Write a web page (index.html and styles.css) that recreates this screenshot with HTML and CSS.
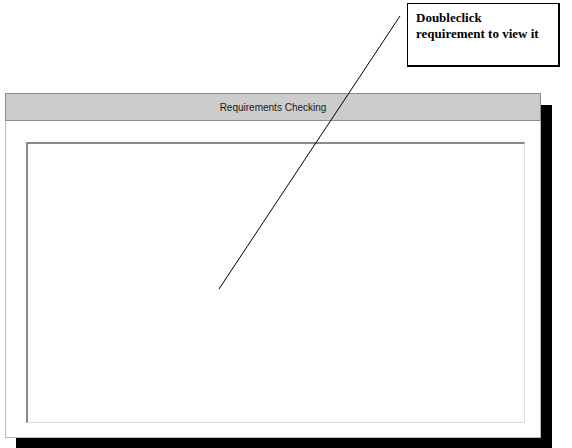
FILE: index.html
```html
<!DOCTYPE html>
<html>
<head>
<meta charset="utf-8">
<link rel="stylesheet" href="styles.css">
</head>
<body>
<div class="canvas">
  <div class="panel">
    <div class="panel-header">Requirements Checking</div>
    <div class="panel-body">
      <div class="list-box"></div>
    </div>
  </div>
  <div class="callout">Doubleclick<br>requirement to view it</div>
  <svg class="pointer" width="572" height="448" viewBox="0 0 572 448">
    <line x1="400" y1="16" x2="219" y2="289" stroke="#000" stroke-width="1"/>
  </svg>
</div>
</body>
</html>
```
FILE: styles.css
```css
html, body {
  margin: 0;
  padding: 0;
  background: #fff;
  overflow: hidden;
}
.canvas {
  position: relative;
  width: 572px;
  height: 448px;
  overflow: hidden;
  padding-top: 93px;
  box-sizing: border-box;
}
.panel {
  margin-left: 5px;
  width: 536px;
  box-shadow: 11px 12px 0 #000;
  background: #fff;
}
.panel-header {
  height: 26px;
  background: #cccccc;
  border: 1px solid #8c8c8c;
  font-family: "Liberation Sans", Arial, sans-serif;
  font-size: 10px;
  color: #1a1a1a;
  display: flex;
  align-items: center;
  justify-content: center;
  box-sizing: content-box;
}
.panel-body {
  border: 1px solid #b8b8b8;
  border-top: none;
  padding: 21px 0 14px 20px;
  background: #fff;
}
.list-box {
  width: 496px;
  height: 278px;
  border-top: 2px solid #8a8a8a;
  border-left: 2px solid #8a8a8a;
  border-right: 1px solid #dcdcdc;
  border-bottom: 1px solid #dcdcdc;
  background: #fff;
}
.callout {
  position: absolute;
  left: 407px;
  top: 3px;
  width: 142px;
  height: 55px;
  padding: 6px 0 0 8px;
  border: 1px solid #000;
  border-right-width: 2px;
  border-bottom-width: 2px;
  background: #fff;
  font-family: "Liberation Serif", "Times New Roman", serif;
  font-weight: bold;
  font-size: 13px;
  line-height: 16px;
  color: #000;
}
.pointer {
  position: absolute;
  left: 0;
  top: 0;
  pointer-events: none;
}
```
